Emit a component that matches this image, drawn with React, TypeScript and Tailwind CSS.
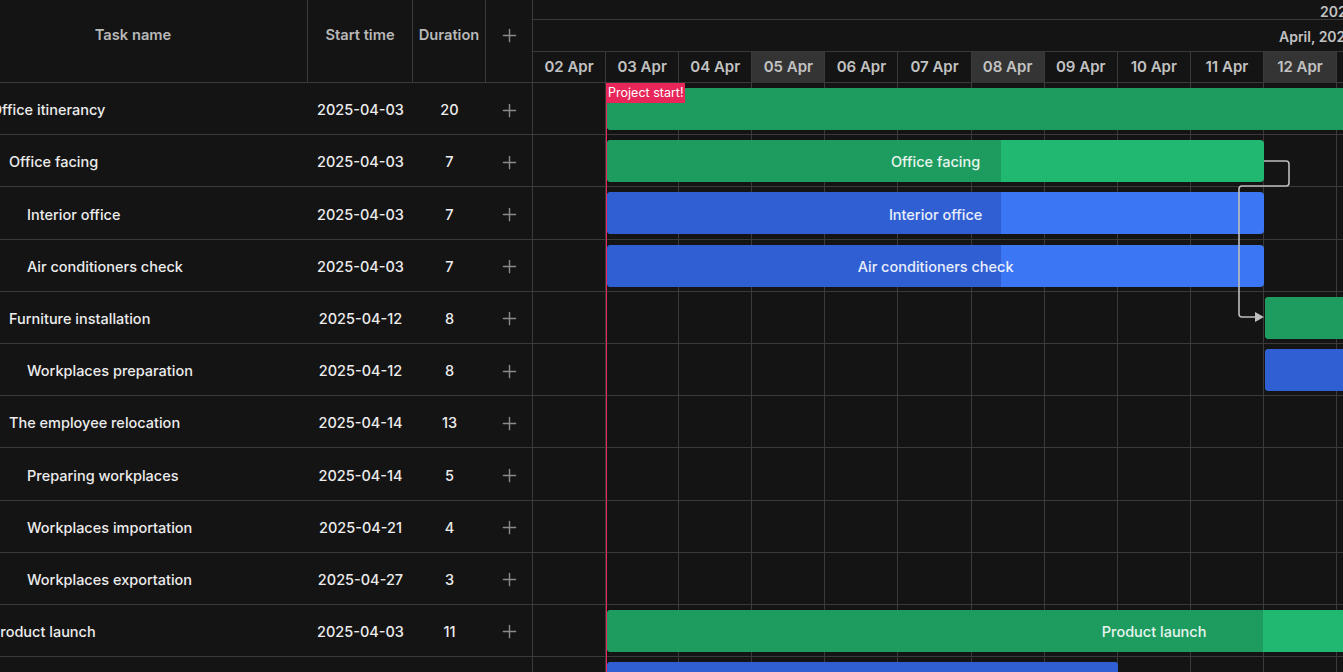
import { Plus } from 'lucide-react'

// Gantt view — dark theme, April 2025

const DAY = 73.1
const DAYS = ['02 Apr', '03 Apr', '04 Apr', '05 Apr', '06 Apr', '07 Apr', '08 Apr', '09 Apr', '10 Apr', '11 Apr', '12 Apr', '13 Apr']
const HILITE = [3, 6, 10]

type Bar = { start: number; width: number; progress: number; kind: 'project' | 'task'; label?: string }
interface Row { name: string; level: number; start: string; duration: number; bar?: Bar }

const ROWS: Row[] = [
  { name: 'Office itinerancy', level: 0, start: '2025-04-03', duration: 20, bar: { start: 1, width: 2200, progress: 1, kind: 'project' } },
  { name: 'Office facing', level: 1, start: '2025-04-03', duration: 7, bar: { start: 1, width: 657, progress: 0.6, kind: 'project', label: 'Office facing' } },
  { name: 'Interior office', level: 2, start: '2025-04-03', duration: 7, bar: { start: 1, width: 657, progress: 0.6, kind: 'task', label: 'Interior office' } },
  { name: 'Air conditioners check', level: 2, start: '2025-04-03', duration: 7, bar: { start: 1, width: 657, progress: 0.6, kind: 'task', label: 'Air conditioners check' } },
  { name: 'Furniture installation', level: 1, start: '2025-04-12', duration: 8, bar: { start: 10, width: 585, progress: 1, kind: 'project', label: 'Furniture installation' } },
  { name: 'Workplaces preparation', level: 2, start: '2025-04-12', duration: 8, bar: { start: 10, width: 585, progress: 1, kind: 'task', label: 'Workplaces preparation' } },
  { name: 'The employee relocation', level: 1, start: '2025-04-14', duration: 13 },
  { name: 'Preparing workplaces', level: 2, start: '2025-04-14', duration: 5 },
  { name: 'Workplaces importation', level: 2, start: '2025-04-21', duration: 4 },
  { name: 'Workplaces exportation', level: 2, start: '2025-04-27', duration: 3 },
  { name: 'Product launch', level: 0, start: '2025-04-03', duration: 11, bar: { start: 1, width: 1094, progress: 0.6, kind: 'project', label: 'Product launch' } },
  { name: 'Marketing analysis', level: 1, start: '2025-04-03', duration: 7, bar: { start: 1, width: 511, progress: 1, kind: 'task' } },
]

export default function App() {
  return (
    <div className="flex h-[672px] w-[1343px] overflow-hidden bg-[#141414] text-[#ececec] font-['Inter','Liberation_Sans',sans-serif]">
      {/* Grid */}
      <div className="w-[533px] shrink-0 border-r border-[#3a3a3a] overflow-hidden">
        <div className="flex h-[83px] border-b border-[#3a3a3a] text-[14.7px] font-semibold text-[#b8b8b8]">
          <div className="w-[308px] shrink-0 overflow-hidden border-r border-[#3a3a3a]">
            <div className="w-[350px] -ml-[42px] h-full flex items-center justify-center pb-[11px]">Task name</div>
          </div>
          <div className="w-[105px] shrink-0 flex items-center justify-center pb-[11px] border-r border-[#3a3a3a]">Start time</div>
          <div className="w-[73px] shrink-0 flex items-center justify-center pb-[11px] border-r border-[#3a3a3a]">Duration</div>
          <div className="flex-1 flex items-center justify-center pb-[11px] text-[#8a8a8a]"><Plus size={21} strokeWidth={1.6} /></div>
        </div>
        {ROWS.map(r => (
          <div key={r.name} className="flex h-[52.2px] pt-[3px] border-b border-[#3a3a3a] text-[14.5px] font-medium">
            <div className="w-[308px] shrink-0 overflow-hidden">
              <div className="w-[350px] -ml-[42px] h-full flex items-center whitespace-nowrap" style={{ paddingLeft: 33 + r.level * 18 }}>{r.name}</div>
            </div>
            <div className="w-[105px] shrink-0 flex items-center justify-center">{r.start}</div>
            <div className="w-[73px] shrink-0 flex items-center justify-center">{r.duration}</div>
            <div className="flex-1 flex items-center justify-center text-[#8a8a8a]"><Plus size={21} strokeWidth={1.6} /></div>
          </div>
        ))}
      </div>

      {/* Timeline */}
      <div className="flex-1 min-w-0 overflow-hidden">
        <div className="h-[83px] border-b border-[#3a3a3a] text-[14px] font-semibold text-[#c2c2c2]">
          <div className="h-[20px] border-b border-[#3a3a3a] flex items-center pt-[3px] pl-[787px] whitespace-nowrap">2025</div>
          <div className="h-[32px] border-b border-[#3a3a3a] flex items-center pt-[2px] pl-[746px] whitespace-nowrap">April, 2025</div>
          <div className="flex h-[31px]">
            {DAYS.map((d, i) => (
              <div key={d} className={`shrink-0 flex items-center justify-center border-r border-[#3a3a3a] text-[15px] ${HILITE.includes(i) ? 'bg-[#343434]' : ''}`} style={{ width: DAY }}>{d}</div>
            ))}
          </div>
        </div>

        <div className="relative">
          {ROWS.map(r => (
            <div key={r.name} className="relative flex h-[52.2px] border-b border-[#3a3a3a]">
              {DAYS.map(d => <div key={d} className="shrink-0 h-full border-r border-[#3a3a3a]" style={{ width: DAY }} />)}
              {r.bar && <GanttBar bar={r.bar} />}
            </div>
          ))}

          {/* marker */}
          <div className="absolute top-0 bottom-0 w-px bg-[#e8265a]" style={{ left: DAY }} />
          <div className="absolute top-0 h-[20px] bg-[#e8265a] px-[2px] text-[12.5px] leading-[20px] text-white whitespace-nowrap" style={{ left: DAY }}>Project start!</div>

          {/* link */}
          <svg className="absolute left-0 top-0 pointer-events-none" width="810" height="260">
            <path d="M731 78 H753 Q756 78 756 81 V100 Q756 103 753 103 H709 Q706 103 706 106 V231 Q706 234 709 234 H723" fill="none" stroke="#bdbdbd" strokeWidth="1.6" />
            <path d="M722 229 L731 234 L722 239 Z" fill="#bdbdbd" />
          </svg>
        </div>
      </div>
    </div>
  )
}

function GanttBar({ bar }: { bar: Bar }) {
  const dark = bar.kind === 'project' ? 'bg-[#1e9b5f]' : 'bg-[#2f5fd3]'
  const light = bar.kind === 'project' ? 'bg-[#21b871]' : 'bg-[#3b76f5]'
  return (
    <div className={`absolute top-[5px] h-[42px] rounded-[4px] overflow-hidden ${light}`} style={{ left: bar.start * DAY + 1, width: bar.width }}>
      <div className={`absolute left-0 top-0 bottom-0 ${dark}`} style={{ width: `${bar.progress * 100}%` }} />
      {bar.label && (
        <div className="relative h-full pt-[2px] flex items-center justify-center text-[14.5px] font-medium text-white/90 whitespace-nowrap">{bar.label}</div>
      )}
    </div>
  )
}
